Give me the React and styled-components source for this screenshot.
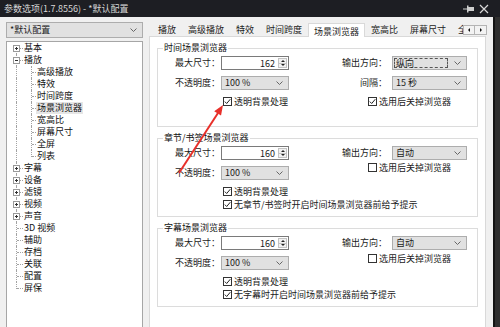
import styled, { createGlobalStyle, css } from 'styled-components'

const GlobalStyle = createGlobalStyle`
  *, *::before, *::after {
    box-sizing: border-box;
  }
  html, body {
    margin: 0;
    padding: 0;
    background: #1d1e23;
  }
  body {
    font-family: "Noto Sans CJK SC", "Noto Sans", sans-serif;
    font-size: 9px;
    color: #1a1a1a;
  }
`

const Window = styled.div`
  position: relative;
  width: 500px;
  height: 327px;
  overflow: hidden;
  display: flex;
  flex-direction: column;
  background: #1d1e23;
`
const TitleBar = styled.div`
  flex: none;
  height: 17px;
  display: flex;
  align-items: center;
  gap: 5px;
  padding: 0 11px 0 4px;
  color: #d8d8d8;
`
const Title = styled.span`
  flex: 1;
  white-space: nowrap;
  line-height: 17px;
`
const Body = styled.div`
  flex: 1;
  min-height: 0;
  display: flex;
`
const Dialog = styled.div`
  flex: none;
  width: 493px;
  display: flex;
  gap: 6px;
  padding: 5px 7px 0 6px;
  background: #f0f0f0;
`
const BackWindow = styled.div`
  flex: 1;
  background: #2f2f2f;
  border-left: 2px solid #141414;
`
const Sidebar = styled.div`
  flex: none;
  width: 137px;
  display: flex;
  flex-direction: column;
  gap: 3px;
`
const Tree = styled.div`
  flex: 1;
  background: #fff;
  border: 1px solid #a6a6a6;
  border-bottom: none;
`
const TreeRow = styled.div`
  display: flex;
  align-items: center;
  height: 12px;
`
const Gutter = styled.span`
  position: relative;
  flex: none;
  align-self: stretch;
  width: ${(p) => p.$w}px;
  &::before {
    content: '';
    position: absolute;
    left: ${(p) => p.$x}px;
    top: ${(p) => (p.$first ? 6 : 0)}px;
    bottom: ${(p) => (p.$last ? 5 : 0)}px;
    border-left: 1px dotted #a3a3a3;
  }
  &::after {
    content: '';
    display: ${(p) => (p.$branch ? 'block' : 'none')};
    position: absolute;
    left: ${(p) => p.$x + 1}px;
    right: 0;
    top: 6px;
    border-top: 1px dotted #a3a3a3;
  }
`
const Expander = styled.svg`
  position: absolute;
  left: 6px;
  top: 3px;
  z-index: 1;
`
const TreeLabel = styled.span`
  padding: 0 1px;
  line-height: 12px;
  white-space: nowrap;
  color: #111;
  background: ${(p) => (p.$selected ? '#e6e6e6' : 'transparent')};
`

const Main = styled.div`
  flex: 1;
  min-width: 0;
  display: flex;
  flex-direction: column;
`
const TabStrip = styled.div`
  position: relative;
  flex: none;
  height: 14px;
  display: flex;
  align-items: flex-end;
  padding-left: 3px;
  overflow: visible;
  z-index: 1;
`
const Tab = styled.span`
  flex: none;
  height: 14px;
  padding: 1px 6px 0;
  line-height: 13px;
  white-space: nowrap;
  color: #222;
  ${(p) =>
    p.$active &&
    css`
      padding: 1px 5px 0;
      margin-bottom: -1px;
      background: #fff;
      border: 1px solid #d9d9d9;
      border-bottom: none;
    `}
`
const TabScroller = styled.div`
  position: absolute;
  right: -1px;
  top: 3px;
  display: flex;
  background: #f0f0f0;
`
const ScrollButton = styled.span`
  width: 12px;
  height: 10px;
  display: flex;
  align-items: center;
  justify-content: center;
  border: 1px solid #b4b4b4;
  background: #f3f3f3;
  & + & {
    border-left: none;
  }
  &::before {
    content: '';
    border-top: 2px solid transparent;
    border-bottom: 2px solid transparent;
    ${(p) => (p.$dir === 'left' ? 'border-right: 2px solid #111;' : 'border-left: 2px solid #111;')}
  }
`
const TabPage = styled.div`
  flex: 1;
  display: flex;
  flex-direction: column;
  gap: 6px;
  padding: 6px 7px 0;
  background: #fff;
  border: 1px solid #d9d9d9;
  border-bottom: none;
`
const Group = styled.fieldset`
  margin: 0;
  min-width: 0;
  padding: 0 9px 5px 5px;
  border: 1px solid #dcdcdc;
`
const Legend = styled.legend`
  padding: 0 1px;
  line-height: 10px;
  color: #111;
`
const Grid = styled.div`
  display: grid;
  grid-template-columns: 46px 68px 79px 24px 75px;
  grid-template-rows: 20px 19px 13px 13px;
  align-items: start;
  margin: 3px 0 0 12px;
`
const Label = styled.span`
  grid-column: ${(p) => p.$col};
  line-height: 14px;
  white-space: nowrap;
  ${(p) => p.$right && 'text-align: right; padding-right: 5px;'}
`
const SpinBox = styled.div`
  grid-column: 2;
  width: 68px;
  height: 14px;
  display: flex;
  padding: 1px;
  background: #fff;
  border: 1px solid #7a7a7a;
`
const SpinValue = styled.span`
  flex: 1;
  text-align: right;
  padding-right: 3px;
  line-height: 12px;
`
const SpinButtons = styled.span`
  width: 9px;
  display: flex;
  flex-direction: column;
`
const SpinButton = styled.span`
  flex: 1;
  display: flex;
  align-items: center;
  justify-content: center;
  background: #f2f2f2;
  border: 1px solid #c3c3c3;
  & + & {
    border-top: none;
  }
  &::before {
    content: '';
    border-left: 2px solid transparent;
    border-right: 2px solid transparent;
    ${(p) => (p.$dir === 'up' ? 'border-bottom: 2px solid #222;' : 'border-top: 2px solid #222;')}
  }
`
const Combo = styled.div`
  grid-column: ${(p) => p.$col || 'auto'};
  width: ${(p) => p.$w}px;
  height: ${(p) => p.$h || 14}px;
  flex: none;
  display: flex;
  align-items: center;
  gap: 2px;
  padding: 0 5px 0 3px;
  background: #e1e1e1;
  border: 1px solid #adadad;
`
const ComboText = styled.span`
  flex: 1;
  white-space: nowrap;
  line-height: 12px;
  ${(p) =>
    p.$focus &&
    css`
      align-self: stretch;
      margin: 1px 4px 1px -2px;
      padding-left: 1px;
      border: 1px dashed #555;
      line-height: 10px;
    `}
`
const Check = styled.span`
  grid-column: ${(p) => p.$col};
  grid-row: ${(p) => p.$row};
  display: flex;
  align-items: center;
  gap: 2px;
  height: 12px;
  margin-left: ${(p) => p.$ml || 0}px;
  margin-top: ${(p) => p.$mt || 0}px;
  white-space: nowrap;
`
const Box = styled.span`
  flex: none;
  width: 9px;
  height: 9px;
  display: flex;
  align-items: center;
  justify-content: center;
  background: #fff;
  border: 1px solid #333;
`
const Annotation = styled.svg`
  position: absolute;
  left: 0;
  top: 0;
  pointer-events: none;
  z-index: 5;
`

const Chevron = () => (
  <svg width="7" height="4" viewBox="0 0 7 4">
    <polyline points="0.5,0.5 3.5,3.5 6.5,0.5" fill="none" stroke="#666" strokeWidth="1" />
  </svg>
)

const ComboBox = ({ value, w, h, col, focus }) => (
  <Combo $w={w} $h={h} $col={col}>
    <ComboText $focus={focus}>{value}</ComboText>
    <Chevron />
  </Combo>
)

const Spin = ({ value }) => (
  <SpinBox>
    <SpinValue>{value}</SpinValue>
    <SpinButtons>
      <SpinButton $dir="up" />
      <SpinButton $dir="down" />
    </SpinButtons>
  </SpinBox>
)

const CheckItem = ({ label, checked, col, row, ml, mt }) => (
  <Check $col={col} $row={row} $ml={ml} $mt={mt}>
    <Box>
      {checked && (
        <svg width="7" height="7" viewBox="0 0 7 7">
          <polyline points="0.8,3.6 2.7,5.5 6.3,1.2" fill="none" stroke="#222" strokeWidth="1" />
        </svg>
      )}
    </Box>
    {label}
  </Check>
)

const TREE = [
  { label: '基本', exp: '+' },
  {
    label: '播放',
    exp: '-',
    children: ['高级播放', '特效', '时间跨度', '场景浏览器', '宽高比', '屏幕尺寸', '全屏', '列表'],
  },
  { label: '字幕', exp: '+' },
  { label: '设备', exp: '+' },
  { label: '滤镜', exp: '+' },
  { label: '视频', exp: '+' },
  { label: '声音', exp: '+' },
  { label: '3D 视频' },
  { label: '辅助' },
  { label: '存档' },
  { label: '关联' },
  { label: '配置' },
  { label: '屏保' },
]

const TABS = ['播放', '高级播放', '特效', '时间跨度', '场景浏览器', '宽高比', '屏幕尺寸', '全屏']

const ExpanderBox = ({ sign }) => (
  <Expander width="7" height="7" viewBox="0 0 7 7">
    <rect x="0.5" y="0.5" width="6" height="6" fill="#fff" stroke="#9a9a9a" />
    <line x1="2" y1="3.5" x2="5" y2="3.5" stroke="#333" />
    {sign === '+' && <line x1="3.5" y1="2" x2="3.5" y2="5" stroke="#333" />}
  </Expander>
)

const TreeView = () => {
  const rows = []
  TREE.forEach((item, i) => {
    const first = i === 0
    const last = i === TREE.length - 1
    rows.push(
      <TreeRow key={item.label}>
        <Gutter $w={16} $x={9} $first={first} $last={last} $branch>
          {item.exp && <ExpanderBox sign={item.exp} />}
        </Gutter>
        <TreeLabel>{item.label}</TreeLabel>
      </TreeRow>
    )
    ;(item.children || []).forEach((child, j, list) => (
      rows.push(
        <TreeRow key={child}>
          <Gutter $w={16} $x={9} />
          <Gutter $w={13} $x={8} $last={j === list.length - 1} $branch />
          <TreeLabel $selected={child === '场景浏览器'}>{child}</TreeLabel>
        </TreeRow>
      )
    ))
  })
  return <Tree>{rows}</Tree>
}

const App = () => {
  return (
    <Window>
      <GlobalStyle />
      <TitleBar>
        <Title>参数选项(1.7.8556) - *默认配置</Title>
        <svg width="11" height="8" viewBox="0 0 11 8">
          <line x1="0" y1="4" x2="4" y2="4" stroke="#cfcfcf" />
          <rect x="4" y="0.5" width="1.5" height="7" fill="#cfcfcf" />
          <rect x="5" y="2" width="6" height="4" fill="#cfcfcf" />
        </svg>
        <svg width="10" height="10" viewBox="0 0 10 10">
          <path d="M1 1 L9 9 M9 1 L1 9" stroke="#d8d8d8" strokeWidth="1.2" />
        </svg>
      </TitleBar>
      <Body>
        <Dialog>
          <Sidebar>
            <ComboBox value="*默认配置" w={137} h={16} />
            <TreeView />
          </Sidebar>
          <Main>
            <TabStrip>
              {TABS.map((t) => (
                <Tab key={t} $active={t === '场景浏览器'}>
                  {t}
                </Tab>
              ))}
              <TabScroller>
                <ScrollButton $dir="left" />
                <ScrollButton $dir="right" />
              </TabScroller>
            </TabStrip>
            <TabPage>
              <Group>
                <Legend>时间场景浏览器</Legend>
                <Grid>
                  <Label $col={1}>最大尺寸：</Label>
                  <Spin value="162" />
                  <Label $col="3 / 5" $right>输出方向：</Label>
                  <ComboBox value="纵向" w={75} col={5} focus />
                  <Label $col={1}>不透明度：</Label>
                  <ComboBox value="100 %" w={68} col={2} />
                  <Label $col="3 / 5" $right>间隔：</Label>
                  <ComboBox value="15 秒" w={75} col={5} />
                  <CheckItem label="透明背景处理" checked col="2 / 4" row={3} ml={2} />
                  <CheckItem label="选用后关掉浏览器" checked col="4 / 6" row={3} />
                </Grid>
              </Group>
              <Group>
                <Legend>章节/书签场景浏览器</Legend>
                <Grid>
                  <Label $col={1}>最大尺寸：</Label>
                  <Spin value="160" />
                  <Label $col="3 / 5" $right>输出方向：</Label>
                  <ComboBox value="自动" w={75} col={5} />
                  <Label $col={1}>不透明度：</Label>
                  <ComboBox value="100 %" w={68} col={2} />
                  <CheckItem label="选用后关掉浏览器" col="4 / 6" row={2} mt={-5} />
                  <CheckItem label="透明背景处理" checked col="2 / 4" row={3} ml={2} />
                  <CheckItem label="无章节/书签时开启时间场景浏览器前给予提示" checked col="2 / 6" row={4} ml={2} />
                </Grid>
              </Group>
              <Group>
                <Legend>字幕场景浏览器</Legend>
                <Grid>
                  <Label $col={1}>最大尺寸：</Label>
                  <Spin value="160" />
                  <Label $col="3 / 5" $right>输出方向：</Label>
                  <ComboBox value="自动" w={75} col={5} />
                  <Label $col={1}>不透明度：</Label>
                  <ComboBox value="100 %" w={68} col={2} />
                  <CheckItem label="选用后关掉浏览器" col="4 / 6" row={2} mt={-4} />
                  <CheckItem label="透明背景处理" checked col="2 / 4" row={3} ml={2} />
                  <CheckItem label="无字幕时开启时间场景浏览器前给予提示" checked col="2 / 6" row={4} ml={2} />
                </Grid>
              </Group>
            </TabPage>
          </Main>
        </Dialog>
        <BackWindow />
      </Body>
      <Annotation width="500" height="327" viewBox="0 0 500 327">
        <line x1="179" y1="173" x2="218" y2="113" stroke="#e8302a" strokeWidth="2" />
        <polygon points="223,105 221,115.6 214.2,111.2" fill="#e8302a" />
      </Annotation>
    </Window>
  )
}

export default App
